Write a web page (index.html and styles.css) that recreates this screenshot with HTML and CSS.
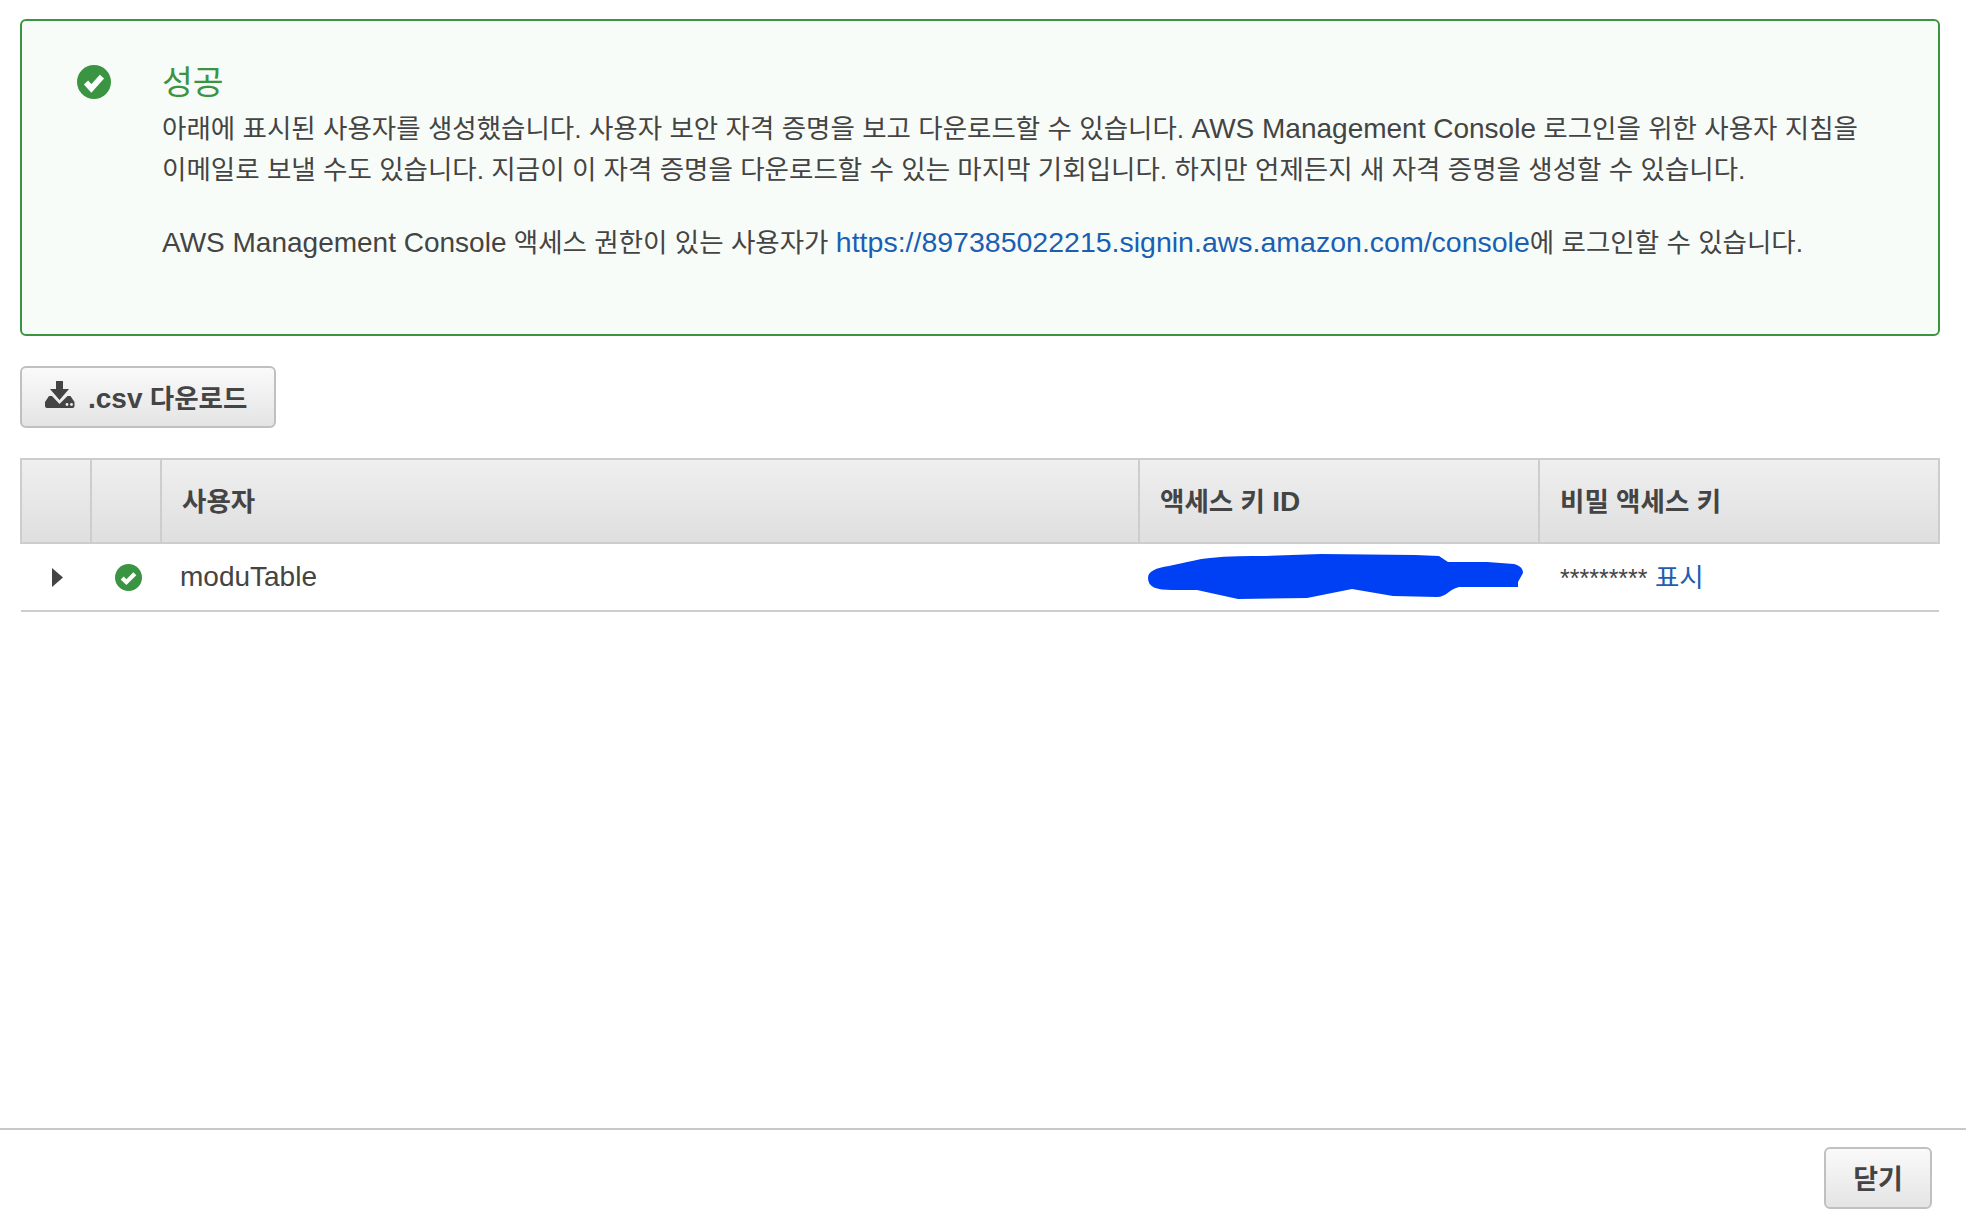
FILE: index.html
```html
<!DOCTYPE html>
<html lang="ko">
<head>
<meta charset="utf-8">
<title>성공</title>
<link rel="stylesheet" href="styles.css">
</head>
<body>
<main class="content">
  <section class="alert">
    <svg class="alert-icon" viewBox="0 0 32 32"><circle cx="16" cy="16" r="16" fill="#3b9441"/><path d="M8.500 16.500l5 5.500 10-11" fill="none" stroke="#fff" stroke-width="5.400"/></svg>
    <div class="alert-body">
      <h1 class="alert-title">성공</h1>
      <p class="alert-text">아래에 표시된 사용자를 생성했습니다. 사용자 보안 자격 증명을 보고 다운로드할 수 있습니다. <span class="latin">AWS Management Console</span> 로그인을 위한 사용자 지침을<br>이메일로 보낼 수도 있습니다. 지금이 이 자격 증명을 다운로드할 수 있는 마지막 기회입니다. 하지만 언제든지 새 자격 증명을 생성할 수 있습니다.</p>
      <p class="alert-text alert-text-gap"><span class="latin">AWS Management Console</span> 액세스 권한이 있는 사용자가 <a class="link link-url" href="#">https://897385022215.signin.aws.amazon.com/console</a>에 로그인할 수 있습니다.</p>
    </div>
  </section>

  <button class="btn btn-download" type="button">
    <svg class="download-icon" viewBox="0 0 30 27"><path d="M11 0h7v8h6L14.500 19 5 8h6z" fill="#444"/><path d="M0 21l4-6h3l7.500 8 8-8h3l4 6v4a2 2 0 0 1-2 2H2a2 2 0 0 1-2-2z" fill="#444"/><circle cx="22" cy="23.500" r="1.400" fill="#eee"/><circle cx="26.500" cy="23.500" r="1.400" fill="#eee"/></svg>
    <span><span class="latin">.csv</span> 다운로드</span>
  </button>

  <table class="users">
    <colgroup>
      <col class="col-toggle"><col class="col-status"><col class="col-user"><col class="col-key"><col class="col-secret">
    </colgroup>
    <thead>
      <tr><th></th><th></th><th>사용자</th><th>액세스 키 <span class="latin">ID</span></th><th>비밀 액세스 키</th></tr>
    </thead>
    <tbody>
      <tr>
        <td class="cell-toggle"><svg class="caret" viewBox="0 0 11 19"><path d="M0 0l11 9.500L0 19z" fill="#444"/></svg></td>
        <td class="cell-status"><svg class="status-icon" viewBox="0 0 32 32"><circle cx="16" cy="16" r="16" fill="#3b9441"/><path d="M8.500 16.500l5 5 10-10" fill="none" stroke="#fff" stroke-width="5"/></svg></td>
        <td class="cell-user latin">moduTable</td>
        <td class="cell-key"><svg class="scribble" viewBox="0 0 375 46"><path d="M0 24C0 17 8 14 21 12C40 8 50 5 62 4C80 2 100 2 118 2L173 0 267 1 291 2 300 8 339 8 366 10C373 12 375 15 375 19L370 28V33H311C300 36 298 43 289 43L245 42 204 35 159 44 90 45 49 36H24C8 36 0 33 0 24z" fill="#0040f5"/></svg></td>
        <td class="cell-secret"><span class="stars">*********</span> <a class="link" href="#">표시</a></td>
      </tr>
    </tbody>
  </table>
</main>
<footer class="footer">
  <button class="btn btn-close" type="button">닫기</button>
</footer>
</body>
</html>
```
FILE: styles.css
```css
* { box-sizing: border-box; }
html, body { margin: 0; height: 100%; }
body {
  display: flex;
  flex-direction: column;
  height: 1216px;
  overflow: hidden;
  background: #fff;
  color: #444;
  font-family: "Liberation Sans", "Noto Sans CJK KR", sans-serif;
  font-size: 26.500px;
}
.latin { font-size: 28px; }
.content { flex: 1; padding: 19px 26px 0 20px; }

.alert {
  display: flex;
  height: 317px;
  padding: 44px 56px 0 55px;
  background: #f8fcf8;
  border: 2px solid #3b9441;
  border-radius: 6px;
}
.alert-icon { flex: none; width: 34px; height: 34px; margin: 0; }
.alert-body { margin-left: 51px; }
.alert-title {
  margin: 0 0 7px;
  color: #3b9441;
  font-size: 33.500px;
  font-weight: 400;
  line-height: 36px;
}
.alert-text { margin: 0; line-height: 41px; white-space: nowrap; }
.alert-text-gap { margin-top: 31px; }
.link { color: #1a5fb4; text-decoration: none; }
.link-url { font-size: 28.500px; }

.btn {
  border: 2px solid #c0c0c0;
  border-radius: 6px;
  background: linear-gradient(#fafafa, #e4e4e4);
  color: #444;
  font-family: inherit;
  font-weight: 700;
  font-size: 26.500px;
  padding: 0 0 2px;
}
.btn-download {
  display: flex;
  align-items: center;
  width: 256px;
  height: 62px;
  margin-top: 30px;
  padding-left: 23px;
}
.download-icon { width: 30px; height: 27px; margin: -4px 13px 0 0; }

.users {
  width: 1918px;
  margin-top: 30px;
  border-collapse: collapse;
  table-layout: fixed;
}
.col-toggle { width: 70px; }
.col-status { width: 70px; }
.col-user { width: 978px; }
.col-key { width: 400px; }
.col-secret { width: 400px; }
.users th {
  height: 84px;
  padding: 0 20px 3px;
  border: 2px solid #cdcdcd;
  background: linear-gradient(#efefef, #dfdfdf);
  font-size: 26.500px;
  font-weight: 700;
  text-align: left;
}
.users td {
  height: 68px;
  padding: 0 20px;
  border-bottom: 2px solid #cdcdcd;
}
.users td.cell-toggle { padding: 0 0 0 31px; }
.users td.cell-status { padding: 0 0 0 24px; }
.users td.cell-user { padding-left: 19px; }
.users td.cell-key { padding: 0 0 0 9px; }
.users td.cell-secret { padding-bottom: 4px; padding-left: 21px; }
.caret { display: block; width: 11px; height: 19px; }
.status-icon { display: block; width: 27px; height: 27px; }
.scribble { display: block; width: 375px; height: 46px; }
.stars { font-size: 25px; }

.footer {
  display: flex;
  justify-content: flex-end;
  height: 88px;
  padding: 17px 34px 0 0;
  border-top: 2px solid #c8c8c8;
}
.btn-close { width: 108px; height: 62px; font-size: 27px; }
```
